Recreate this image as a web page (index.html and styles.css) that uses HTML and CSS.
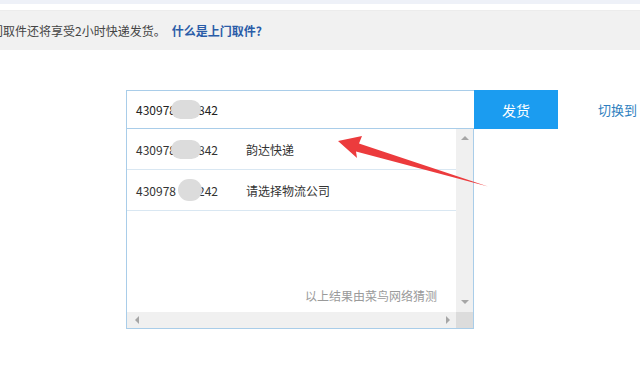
FILE: index.html
```html
<!DOCTYPE html>
<html lang="zh-CN">
<head>
<meta charset="utf-8">
<title>发货</title>
<link rel="stylesheet" href="styles.css">
</head>
<body>
<div class="page">
  <div class="topstrip"></div>
  <div class="notice">
    <span class="notice-text">门取件还将享受2小时快递发货。</span>
    <a class="notice-link" href="#">什么是上门取件?</a>
  </div>
  <div class="form">
    <div class="field">
      <div class="input">
        <span class="num">430978<span class="blob"></span>842</span>
      </div>
      <div class="dropdown">
        <div class="list">
          <div class="row"><span class="num">430978<span class="blob"></span>842</span><span class="co">韵达快递</span></div>
          <div class="row"><span class="num">430978<span class="blob round"></span>242</span><span class="co">请选择物流公司</span></div>
          <div class="hint">以上结果由菜鸟网络猜测</div>
        </div>
        <div class="vscroll"><span class="arr up"></span><span class="arr down"></span></div>
        <div class="hscroll"><span class="arr left"></span><span class="arr right"></span></div>
        <div class="corner"></div>
      </div>
    </div>
    <button class="ship">发货</button>
    <a class="switch" href="#">切换到</a>
  </div>
  <svg class="arrow" width="640" height="372" viewBox="0 0 640 372">
    <polygon points="338,141 362,136 359,143.5 488,186.5 356,151.5 357,158" fill="#ec3b3d"/>
  </svg>
</div>
</body>
</html>
```

FILE: styles.css
```css
* { box-sizing: border-box; }
html, body { margin: 0; padding: 0; }
body {
  width: 640px;
  height: 372px;
  overflow: hidden;
  background: #fff;
  font-family: "Noto Sans CJK SC", "Noto Sans", sans-serif;
  font-size: 12px;
  color: #333;
}
.page { position: relative; width: 640px; height: 372px; }
.topstrip {
  height: 4px;
  background: #eef1f8;
  margin-bottom: 6px;
}
.notice {
  height: 40px;
  background: #f1f1f1;
  border-top: 1px solid #ececec;
  display: flex;
  align-items: center;
  white-space: nowrap;
  overflow: hidden;
}
.notice-text { margin-left: -9px; color: #444; }
.notice-link {
  margin-left: 6px;
  color: #2a5ca8;
  font-weight: bold;
  text-decoration: none;
}
.form {
  display: flex;
  align-items: flex-start;
  margin-top: 40px;
  margin-left: 126px;
}
.field { width: 348px; display: flex; flex-direction: column; }
.input {
  height: 39px;
  border: 1px solid #a9cde9;
  border-right: none;
  display: flex;
  align-items: center;
  padding-left: 9px;
  font-size: 12px;
  color: #222;
}
.num { display: inline-flex; align-items: center; width: 96px; }
.blob {
  display: inline-block;
  width: 30px;
  height: 19px;
  border-radius: 10px;
  background: #dcdcdc;
  margin-left: -5px;
  margin-right: -3px;
  position: relative;
}
.blob.round { width: 24px; height: 22px; border-radius: 11px; margin-left: 2px; margin-right: -4px; }
.dropdown {
  height: 200px;
  border: 1px solid #a9cde9;
  border-top: none;
  display: grid;
  grid-template-columns: 1fr 17px;
  grid-template-rows: 1fr 16px;
}
.list { display: flex; flex-direction: column; }
.row {
  height: 41px;
  border-bottom: 1px solid #d9e7f2;
  display: flex;
  align-items: center;
  padding-left: 9px;
  color: #333;
}
.row .num { width: 110px; }
.co { color: #333; }
.hint {
  margin-top: auto;
  margin-bottom: 8px;
  padding-right: 19px;
  text-align: right;
  color: #9a9a9a;
}
.vscroll {
  background: #f0f0f0;
  display: flex;
  flex-direction: column;
  justify-content: space-between;
  align-items: center;
  padding: 7px 0 8px;
}
.hscroll {
  background: #f0f0f0;
  display: flex;
  justify-content: space-between;
  align-items: center;
  padding: 0 6px 0 8px;
}
.corner { background: #dcdcdc; }
.arr { width: 0; height: 0; border: 4px solid transparent; }
.arr.up { border-bottom-color: #a6a6a6; border-top-width: 0; }
.arr.down { border-top-color: #a6a6a6; border-bottom-width: 0; }
.arr.left { border-right-color: #a6a6a6; border-left-width: 0; }
.arr.right { border-left-color: #a6a6a6; border-right-width: 0; }
.ship {
  width: 84px;
  height: 39px;
  border: none;
  background: #1b9cf0;
  color: #fff;
  font-family: "Noto Sans CJK SC", sans-serif;
  font-size: 14px;
  padding: 0;
  margin: 0;
}
.switch {
  margin-left: 40px;
  line-height: 39px;
  font-size: 13px;
  color: #2f7fc0;
  text-decoration: none;
  white-space: nowrap;
}
.arrow { position: absolute; left: 0; top: 0; pointer-events: none; }
```
